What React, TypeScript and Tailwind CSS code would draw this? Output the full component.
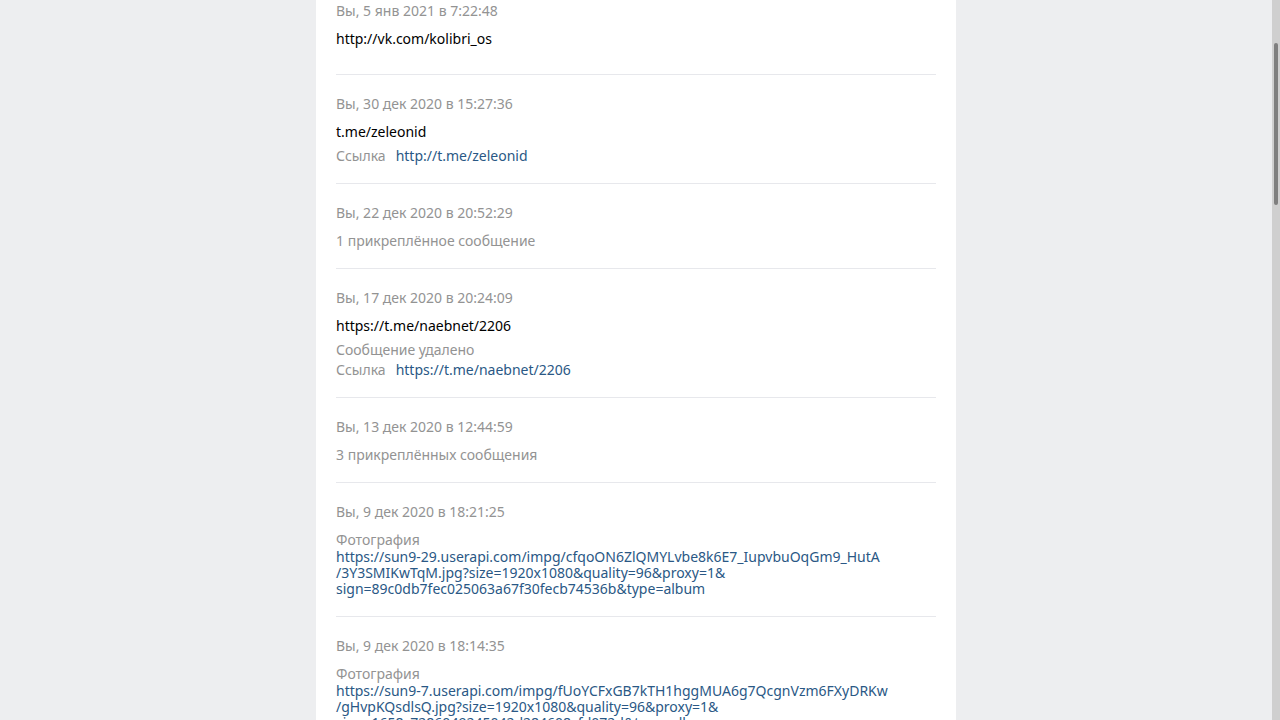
type Entry = {
  date: string;
  text?: string;
  extra?: string[];
  link?: string;
  photo?: string[];
  gray?: string;
  first?: boolean;
};

const entries: Entry[] = [
  { date: "Вы, 5 янв 2021 в 7:22:48", text: "http://vk.com/kolibri_os", first: true },
  { date: "Вы, 30 дек 2020 в 15:27:36", text: "t.me/zeleonid", link: "http://t.me/zeleonid" },
  { date: "Вы, 22 дек 2020 в 20:52:29", gray: "1 прикреплённое сообщение" },
  {
    date: "Вы, 17 дек 2020 в 20:24:09",
    text: "https://t.me/naebnet/2206",
    extra: ["Сообщение удалено"],
    link: "https://t.me/naebnet/2206",
  },
  { date: "Вы, 13 дек 2020 в 12:44:59", gray: "3 прикреплённых сообщения" },
  {
    date: "Вы, 9 дек 2020 в 18:21:25",
    photo: [
      "https://sun9-29.userapi.com/impg/cfqoON6ZlQMYLvbe8k6E7_IupvbuOqGm9_HutA",
      "/3Y3SMIKwTqM.jpg?size=1920x1080&quality=96&proxy=1&",
      "sign=89c0db7fec025063a67f30fecb74536b&type=album",
    ],
  },
  {
    date: "Вы, 9 дек 2020 в 18:14:35",
    photo: [
      "https://sun9-7.userapi.com/impg/fUoYCFxGB7kTH1hggMUA6g7QcgnVzm6FXyDRKw",
      "/gHvpKQsdlsQ.jpg?size=1920x1080&quality=96&proxy=1&",
      "sign=1658c7286049245042d284608cfd072d&type=album",
    ],
  },
];

function Item({ e }: { e: Entry }) {
  return (
    <div
      className={`border-b border-[#e7e8ec] pt-[19px] ${
        e.first ? "pb-[21px]" : e.photo ? "pb-[19px]" : "pb-[17px]"
      }`}
    >
      <div className="leading-5 text-[#939393]">{e.date}</div>

      {e.text && <div className="mt-2 mb-1 leading-5 text-black">{e.text}</div>}

      {e.extra?.map((x) => (
        <div key={x} className="leading-5 text-[#939393]">
          {x}
        </div>
      ))}

      {e.gray && <div className="mt-2 leading-5 text-[#939393]">{e.gray}</div>}

      {e.link && (
        <div className="flex gap-[10px] leading-5">
          <span className="text-[#939393]">Ссылка</span>
          <span className="text-[#2a5885]">{e.link}</span>
        </div>
      )}

      {e.photo && (
        <div className="mt-[9px]">
          <div className="leading-[18px] text-[#939393]">Фотография</div>
          {e.photo.map((line) => (
            <div key={line} className="leading-4 text-[#2a5885] whitespace-nowrap">
              {line}
            </div>
          ))}
        </div>
      )}
    </div>
  );
}

export default function App() {
  return (
    <div
      className="flex h-screen w-full overflow-hidden bg-[#edeef0] text-[14px]"
      style={{ fontFamily: '"Noto Sans", "Open Sans", sans-serif' }}
    >
      {/* Page */}
      <div className="flex flex-1 justify-center">
        <div className="w-[640px] bg-white px-5">
          <div className="-mt-[18px]">
            {entries.map((e) => (
              <Item key={e.date} e={e} />
            ))}
          </div>
        </div>
      </div>

      {/* Scrollbar */}
      <div className="w-2 bg-[#cfcfcf] pt-[43px]">
        <div className="mx-auto h-[162px] w-[4px] rounded-full bg-[#7f7f7f]" />
      </div>
    </div>
  );
}
